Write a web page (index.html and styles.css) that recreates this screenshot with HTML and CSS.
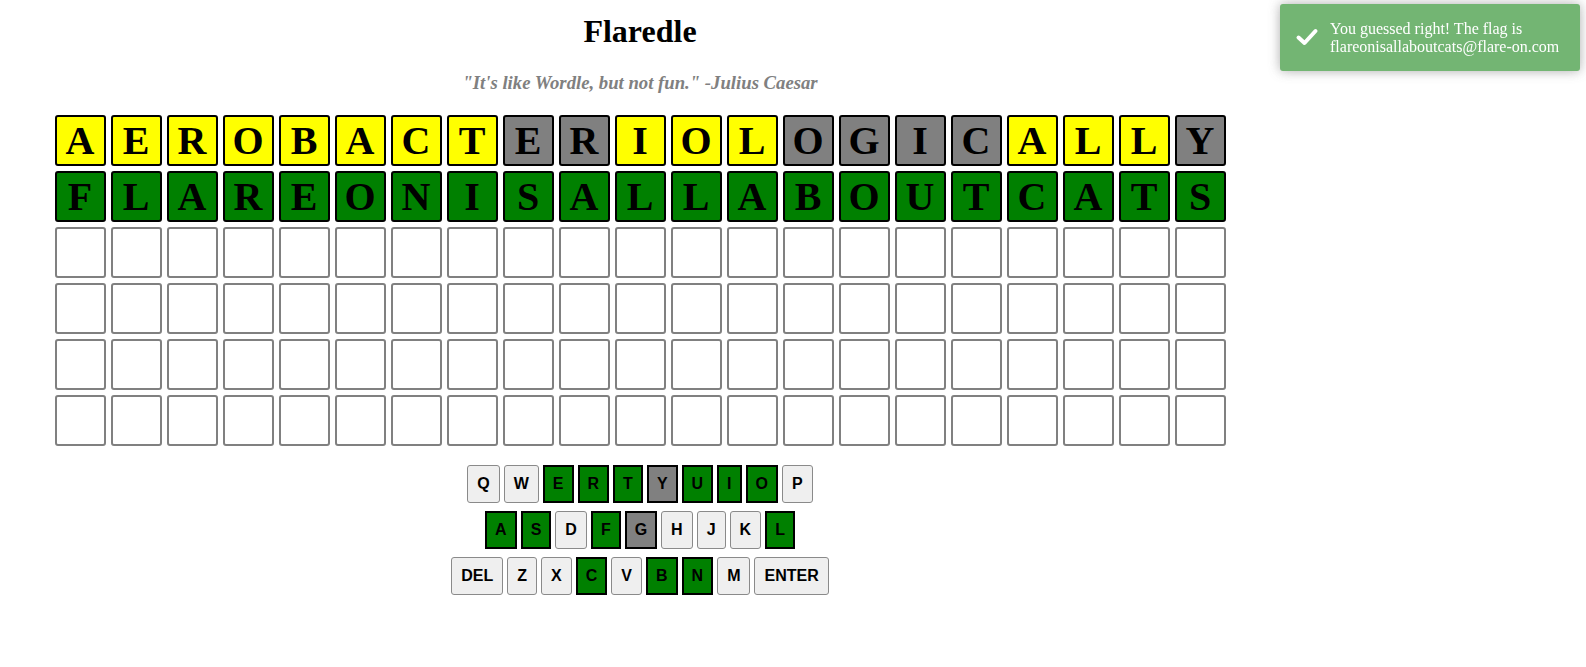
FILE: index.html
```html
<!DOCTYPE html>
<html lang="en">
<head>
<meta charset="utf-8">
<title>Flaredle</title>
<link rel="stylesheet" href="styles.css">
</head>
<body>
<div class="app">
  <h1 class="title">Flaredle</h1>
  <h3 class="subtitle">"It's like Wordle, but not fun." -Julius Caesar</h3>

  <div class="board">
    <div class="tile yellow">A</div><div class="tile yellow">E</div><div class="tile yellow">R</div><div class="tile yellow">O</div><div class="tile yellow">B</div><div class="tile yellow">A</div><div class="tile yellow">C</div><div class="tile yellow">T</div><div class="tile gray">E</div><div class="tile gray">R</div><div class="tile yellow">I</div><div class="tile yellow">O</div><div class="tile yellow">L</div><div class="tile gray">O</div><div class="tile gray">G</div><div class="tile gray">I</div><div class="tile gray">C</div><div class="tile yellow">A</div><div class="tile yellow">L</div><div class="tile yellow">L</div><div class="tile gray">Y</div>
    <div class="tile green">F</div><div class="tile green">L</div><div class="tile green">A</div><div class="tile green">R</div><div class="tile green">E</div><div class="tile green">O</div><div class="tile green">N</div><div class="tile green">I</div><div class="tile green">S</div><div class="tile green">A</div><div class="tile green">L</div><div class="tile green">L</div><div class="tile green">A</div><div class="tile green">B</div><div class="tile green">O</div><div class="tile green">U</div><div class="tile green">T</div><div class="tile green">C</div><div class="tile green">A</div><div class="tile green">T</div><div class="tile green">S</div>
    <div class="tile"></div><div class="tile"></div><div class="tile"></div><div class="tile"></div><div class="tile"></div><div class="tile"></div><div class="tile"></div><div class="tile"></div><div class="tile"></div><div class="tile"></div><div class="tile"></div><div class="tile"></div><div class="tile"></div><div class="tile"></div><div class="tile"></div><div class="tile"></div><div class="tile"></div><div class="tile"></div><div class="tile"></div><div class="tile"></div><div class="tile"></div>
    <div class="tile"></div><div class="tile"></div><div class="tile"></div><div class="tile"></div><div class="tile"></div><div class="tile"></div><div class="tile"></div><div class="tile"></div><div class="tile"></div><div class="tile"></div><div class="tile"></div><div class="tile"></div><div class="tile"></div><div class="tile"></div><div class="tile"></div><div class="tile"></div><div class="tile"></div><div class="tile"></div><div class="tile"></div><div class="tile"></div><div class="tile"></div>
    <div class="tile"></div><div class="tile"></div><div class="tile"></div><div class="tile"></div><div class="tile"></div><div class="tile"></div><div class="tile"></div><div class="tile"></div><div class="tile"></div><div class="tile"></div><div class="tile"></div><div class="tile"></div><div class="tile"></div><div class="tile"></div><div class="tile"></div><div class="tile"></div><div class="tile"></div><div class="tile"></div><div class="tile"></div><div class="tile"></div><div class="tile"></div>
    <div class="tile"></div><div class="tile"></div><div class="tile"></div><div class="tile"></div><div class="tile"></div><div class="tile"></div><div class="tile"></div><div class="tile"></div><div class="tile"></div><div class="tile"></div><div class="tile"></div><div class="tile"></div><div class="tile"></div><div class="tile"></div><div class="tile"></div><div class="tile"></div><div class="tile"></div><div class="tile"></div><div class="tile"></div><div class="tile"></div><div class="tile"></div>
  </div>

  <div class="keyboard">
    <div class="key-row">
      <button class="key">Q</button><button class="key">W</button><button class="key hit">E</button><button class="key hit">R</button><button class="key hit">T</button><button class="key miss">Y</button><button class="key hit">U</button><button class="key hit">I</button><button class="key hit">O</button><button class="key">P</button>
    </div>
    <div class="key-row">
      <button class="key hit">A</button><button class="key hit">S</button><button class="key">D</button><button class="key hit">F</button><button class="key miss">G</button><button class="key">H</button><button class="key">J</button><button class="key">K</button><button class="key hit">L</button>
    </div>
    <div class="key-row">
      <button class="key">DEL</button><button class="key">Z</button><button class="key">X</button><button class="key hit">C</button><button class="key">V</button><button class="key hit">B</button><button class="key hit">N</button><button class="key">M</button><button class="key">ENTER</button>
    </div>
  </div>
</div>

<div class="toast">
  <svg class="toast-icon" width="24" height="20" viewBox="0 0 24 20" aria-hidden="true">
    <path d="M3.5 10.5 L9.5 16 L20.5 4" fill="none" stroke="#fff" stroke-width="4" stroke-linecap="round" stroke-linejoin="round"/>
  </svg>
  <div class="toast-message">You guessed right! The flag is flareonisallaboutcats@flare-on.com</div>
</div>
</body>
</html>
```

FILE: styles.css
```css
body {
  margin: 8px;
  font-family: "Liberation Serif", "Times New Roman", serif;
  background: #fff;
  color: #000;
}

.app {
  width: 1264px;
  display: flex;
  flex-direction: column;
  align-items: center;
}

.title {
  font-size: 32px;
  font-weight: bold;
  margin: 5px 0 0;
  line-height: normal;
}

.subtitle {
  font-size: 18.72px;
  font-weight: bold;
  font-style: italic;
  color: #808080;
  margin: 22px 0 0;
  line-height: normal;
}

.board {
  margin-top: 21px;
  display: grid;
  grid-template-columns: repeat(21, 51px);
  grid-auto-rows: 51px;
  gap: 5px;
}

.tile {
  box-sizing: border-box;
  width: 51px;
  height: 51px;
  border: 2px solid #808080;
  border-radius: 3px;
  display: flex;
  align-items: center;
  justify-content: center;
  font-size: 40px;
  font-weight: bold;
  color: #000;
  background: #fff;
}

.tile.yellow { background: #ffff00; border-color: #000; }
.tile.gray { background: #808080; border-color: #000; }
.tile.green { background: #008000; border-color: #000; }

.keyboard {
  margin-top: 19px;
  display: flex;
  flex-direction: column;
  align-items: center;
  gap: 8px;
}

.key-row {
  display: flex;
  gap: 4px;
}

.key {
  box-sizing: border-box;
  height: 38px;
  padding: 0 9px;
  border: 1px solid #8a8a8a;
  border-radius: 3px;
  background: #efefef;
  color: #000;
  font-family: "Liberation Sans", Arial, sans-serif;
  font-size: 16px;
  font-weight: bold;
  line-height: 18px;
}

.key.hit {
  background: #008000;
  border: 2px solid #000;
  border-radius: 0;
  padding: 0 8px;
}

.key.miss {
  background: #808080;
  border: 2px solid #000;
  border-radius: 0;
  padding: 0 8px;
}

.toast {
  position: fixed;
  top: 4px;
  right: 6px;
  width: 300px;
  box-sizing: border-box;
  padding: 16px 15px 14px 50px;
  background: #51a351;
  opacity: 0.8;
  color: #fff;
  border-radius: 3px;
  box-shadow: 0 0 12px #999;
  font-size: 16px;
  line-height: 18.4px;
}

.toast-icon {
  position: absolute;
  left: 15px;
  top: 50%;
  margin-top: -10px;
}

.toast-message {
  word-wrap: break-word;
}
```
